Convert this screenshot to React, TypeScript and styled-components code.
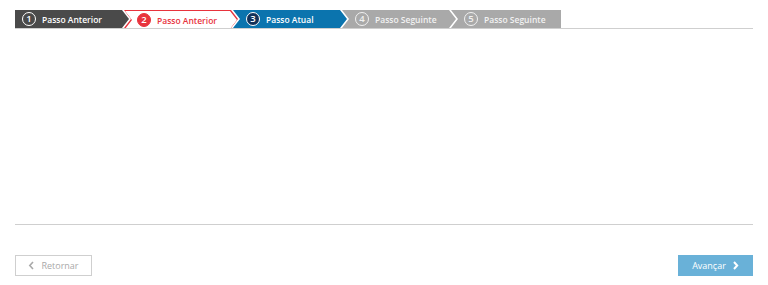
import { FC } from "react";
import styled, { createGlobalStyle } from "styled-components";

type Variant = 'done' | 'error' | 'current' | 'next';

interface StepData {
  n: number
  label: string
  variant: Variant
}

const steps: StepData[] = [
  { n: 1, label: 'Passo Anterior', variant: 'done' },
  { n: 2, label: 'Passo Anterior', variant: 'error' },
  { n: 3, label: 'Passo Atual', variant: 'current' },
  { n: 4, label: 'Passo Seguinte', variant: 'next' },
  { n: 5, label: 'Passo Seguinte', variant: 'next' },
];

const fills: Record<Variant, string> = {
  done: '#4a4a4a',
  error: '#e8333d',
  current: '#0b74ae',
  next: '#a9a9a9',
};

const ARROW = 7;

const shape = (first: boolean, last: boolean) => {
  const left = first ? '0 0, 0 100%' : `0 0, ${ARROW}px 50%, 0 100%`;
  const right = last
    ? '100% 100%, 100% 0'
    : `calc(100% - ${ARROW}px) 100%, 100% 50%, calc(100% - ${ARROW}px) 0`;
  return `polygon(${left}, ${right})`;
};

const App: FC = () => {
  return (
    <>
      <GlobalStyle />
      <StyledWizard>
        <StyledSteps>
          {steps.map((step, i) => {
            const first = i === 0;
            const last = i === steps.length - 1;
            return (
              <StyledStep key={step.n} $variant={step.variant} $first={first} $last={last}>
                <StyledStepInner $variant={step.variant} $first={first} $last={last}>
                  <StyledBadge $variant={step.variant}>{step.n}</StyledBadge>
                  <StyledLabel $variant={step.variant}>{step.label}</StyledLabel>
                </StyledStepInner>
              </StyledStep>
            );
          })}
        </StyledSteps>
        <StyledRule />
        <StyledContent />
        <StyledRule />
        <StyledFooter>
          <StyledBackButton type="button">
            <Chevron dir="left" />
            Retornar
          </StyledBackButton>
          <StyledNextButton type="button">
            Avançar
            <Chevron dir="right" />
          </StyledNextButton>
        </StyledFooter>
      </StyledWizard>
    </>
  );
};

const Chevron: FC<{ dir: 'left' | 'right' }> = ({ dir }) => (
  <svg width="7" height="9" viewBox="0 0 7 9" aria-hidden>
    {dir === 'left'
      ? <path d="M5 1 L1.8 4.5 L5 8" fill="none" stroke="currentColor" strokeWidth="1.6" />
      : <path d="M2 1 L5.2 4.5 L2 8" fill="none" stroke="currentColor" strokeWidth="2" />}
  </svg>
);

const GlobalStyle = createGlobalStyle`
  html, body {
    margin: 0;
    background: #fff;
    font-family: "Open Sans", "Liberation Sans", sans-serif;
  }
`;

const StyledWizard = styled.div`
  width: 738px;
  padding: 10px 15px 0;
`;

const StyledSteps = styled.div`
  display: flex;
  flex-direction: row;
  height: 18px;
`;

const StyledStep = styled.div<{ $variant: Variant, $first: boolean, $last: boolean }>`
  width: ${p => (p.$last ? 110 : 114)}px;
  margin-left: ${p => (p.$first ? 0 : -5)}px;
  height: 100%;
  background: ${p => fills[p.$variant]};
  clip-path: ${p => shape(p.$first, p.$last)};
  position: relative;
`;

const StyledStepInner = styled.div<{ $variant: Variant, $first: boolean, $last: boolean }>`
  display: flex;
  align-items: center;
  gap: 6px;
  height: 100%;
  box-sizing: border-box;
  padding-left: ${p => (p.$first ? 7 : 13)}px;
  background: ${p => (p.$variant === 'error' ? '#fff' : 'transparent')};
  clip-path: ${p => shape(p.$first, p.$last)};
  ${p => p.$variant === 'error' && `
    position: absolute;
    inset: 1px 1px 1px 1px;
    padding-left: 12px;
  `}
`;

const StyledBadge = styled.span<{ $variant: Variant }>`
  width: 14px;
  height: 14px;
  box-sizing: border-box;
  border-radius: 50%;
  display: flex;
  align-items: center;
  justify-content: center;
  font-size: 9.5px;
  font-weight: 600;
  line-height: 1;
  border: 1.5px solid ${p => (p.$variant === 'next' ? '#f0f0f0' : '#fff')};
  color: ${p => (p.$variant === 'next' ? '#f0f0f0' : '#fff')};
  background: ${p => (p.$variant === 'error' ? '#e8333d' : p.$variant === 'current' ? '#13325a' : 'transparent')};
  ${p => p.$variant === 'error' && 'border-color: #e8333d;'}
`;

const StyledLabel = styled.span<{ $variant: Variant }>`
  font-size: 8.5px;
  font-weight: 600;
  white-space: nowrap;
  color: ${p => (p.$variant === 'error' ? '#e8333d' : p.$variant === 'next' ? '#f2f2f2' : '#fff')};
`;

const StyledRule = styled.div`
  height: 1px;
  background: #cfcfcf;
`;

const StyledContent = styled.div`
  height: 195px;
`;

const StyledFooter = styled.div`
  display: flex;
  flex-direction: row;
  justify-content: space-between;
  margin-top: 30px;
`;

const StyledButtonBase = styled.button`
  height: 21px;
  display: flex;
  align-items: center;
  justify-content: center;
  gap: 6px;
  font-family: "Open Sans", "Liberation Sans", sans-serif;
  font-size: 9px;
  border-radius: 0;
  padding: 0;
  cursor: pointer;
`;

const StyledBackButton = styled(StyledButtonBase)`
  width: 77px;
  background: #fff;
  border: 1px solid #cfcfcf;
  color: #a9a9a9;
`;

const StyledNextButton = styled(StyledButtonBase)`
  width: 75px;
  background: #69b1d8;
  border: none;
  color: #fff;
`;

export default App;
